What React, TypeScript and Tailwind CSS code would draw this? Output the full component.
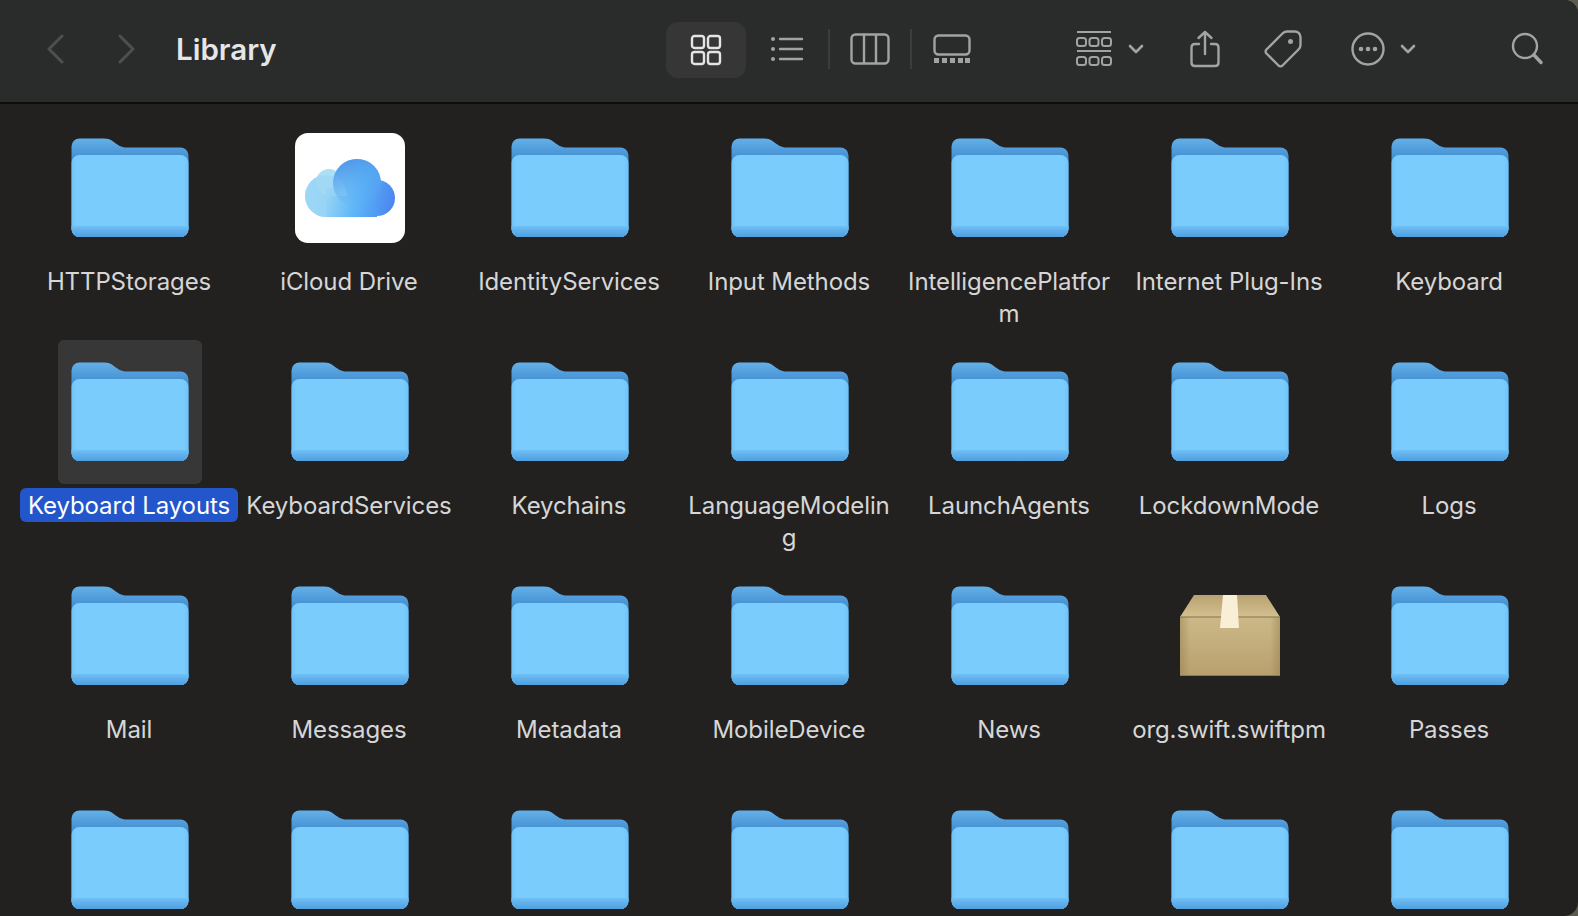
const rows: { name: string; kind?: "icloud" | "package"; selected?: boolean }[] = [
  { name: "HTTPStorages" },
  { name: "iCloud Drive", kind: "icloud" },
  { name: "IdentityServices" },
  { name: "Input Methods" },
  { name: "IntelligencePlatform" },
  { name: "Internet Plug-Ins" },
  { name: "Keyboard" },
  { name: "Keyboard Layouts", selected: true },
  { name: "KeyboardServices" },
  { name: "Keychains" },
  { name: "LanguageModeling" },
  { name: "LaunchAgents" },
  { name: "LockdownMode" },
  { name: "Logs" },
  { name: "Mail" },
  { name: "Messages" },
  { name: "Metadata" },
  { name: "MobileDevice" },
  { name: "News" },
  { name: "org.swift.swiftpm", kind: "package" },
  { name: "Passes" },
  { name: "" },
  { name: "" },
  { name: "" },
  { name: "" },
  { name: "" },
  { name: "" },
  { name: "" },
];

function FolderIcon() {
  return (
    <svg width="118" height="100" viewBox="0 0 118 100" className="block">
      <defs>
        <linearGradient id="fback" gradientUnits="userSpaceOnUse" x1="0" y1="0" x2="0" y2="19">
          <stop offset="0" stopColor="#63b1ea" />
          <stop offset="1" stopColor="#4690d2" />
        </linearGradient>
        <linearGradient id="ffront" x1="0" y1="0" x2="1" y2="0">
          <stop offset="0" stopColor="#70c2f6" />
          <stop offset="0.04" stopColor="#7accfc" />
          <stop offset="0.96" stopColor="#7accfc" />
          <stop offset="1" stopColor="#70c2f6" />
        </linearGradient>
        <linearGradient id="fstrip" x1="0" y1="0" x2="0" y2="1">
          <stop offset="0" stopColor="#6fc0f5" />
          <stop offset="0.4" stopColor="#62b3ec" />
          <stop offset="1" stopColor="#4f9ee0" />
        </linearGradient>
      </defs>
      <path
        d="M8.500 0.500H33C37.500 0.500 39.500 1.500 42.500 3.700C47 7 50 9.500 55.500 9.500H109.500A8 8 0 0 1 117.500 17.500V91A8 8 0 0 1 109.500 99H8.500A8 8 0 0 1 0.500 91V8.500A8 8 0 0 1 8.500 0.500Z"
        fill="url(#fback)"
      />
      <path
        d="M8.500 17H109.500A8 8 0 0 1 117.500 25V91A8 8 0 0 1 109.500 99H8.500A8 8 0 0 1 0.500 91V25A8 8 0 0 1 8.500 17Z"
        fill="url(#ffront)"
      />
      <path d="M0.500 88H117.500V91A8 8 0 0 1 109.500 99H8.500A8 8 0 0 1 0.500 91Z" fill="url(#fstrip)" />
    </svg>
  );
}

function CloudIcon() {
  return (
    <div className="w-[110px] h-[110px] rounded-[13px] bg-white flex items-center justify-center">
      <svg width="92" height="60" viewBox="0 0 92 60">
        <defs>
          <linearGradient id="cl" gradientUnits="userSpaceOnUse" x1="0" y1="20" x2="91" y2="40">
            <stop offset="0" stopColor="#a5dcf6" />
            <stop offset="0.3" stopColor="#93d2f5" />
            <stop offset="0.6" stopColor="#5db6f8" />
            <stop offset="1" stopColor="#4a86ee" />
          </linearGradient>
          <linearGradient id="ct" x1="0.2" y1="0" x2="0.6" y2="1">
            <stop offset="0" stopColor="#4c93e8" />
            <stop offset="1" stopColor="#5db6f8" stopOpacity="0" />
          </linearGradient>
        </defs>
        <g fill="url(#cl)">
          <circle cx="22" cy="38" r="21" />
          <circle cx="25" cy="24" r="13" fill="#acdef5" />
          <circle cx="53" cy="25" r="24" />
          <circle cx="73" cy="40" r="18" />
          <rect x="22" y="30" width="51" height="29" />
        </g>
        <circle cx="22" cy="38" r="21" fill="#9ad6f5" opacity="0.6" />
        <path d="M22 59V38H73V59Z" fill="url(#cl)" />
        <circle cx="53" cy="25" r="24" fill="url(#ct)" />
      </svg>
    </div>
  );
}

function PackageIcon() {
  return (
    <svg width="102" height="82" viewBox="0 0 102 82" className="block">
      <defs>
        <linearGradient id="box" x1="0" y1="0" x2="0" y2="1">
          <stop offset="0" stopColor="#ccb888" />
          <stop offset="1" stopColor="#b8a06e" />
        </linearGradient>
        <linearGradient id="flap" x1="0" y1="0" x2="0" y2="1">
          <stop offset="0" stopColor="#b9a272" />
          <stop offset="1" stopColor="#d3bf8f" />
        </linearGradient>
        <linearGradient id="edge" x1="0" y1="0" x2="1" y2="0">
          <stop offset="0" stopColor="#8f7a4e" stopOpacity="0.45" />
          <stop offset="0.1" stopColor="#8f7a4e" stopOpacity="0" />
          <stop offset="0.9" stopColor="#8f7a4e" stopOpacity="0" />
          <stop offset="1" stopColor="#8f7a4e" stopOpacity="0.45" />
        </linearGradient>
      </defs>
      <path d="M15 0H87L101 22H1Z" fill="url(#flap)" />
      <rect x="1" y="22" width="100" height="59" fill="url(#box)" />
      <rect x="1" y="22" width="100" height="59" fill="url(#edge)" />
      <rect x="1" y="21.500" width="100" height="1" fill="#85724c" />
      <rect x="1" y="80" width="100" height="1" fill="#8f7a4e" />
      <path d="M44 0H58L60 33H41Z" fill="#f8efd6" />
    </svg>
  );
}

function ToolIcon({ w, h, children, color = "#a3a3a3" }: { w: number; h: number; children: React.ReactNode; color?: string }) {
  return (
    <svg width={w} height={h} viewBox={`0 0 ${w} ${h}`} fill="none" stroke={color} strokeWidth="2.400" strokeLinecap="round" strokeLinejoin="round">
      {children}
    </svg>
  );
}

function Toolbar() {
  return (
    <div className="h-[104px] shrink-0 bg-[#2a2b2b] border-b-2 border-[#0d0d0d] flex items-center pb-[4px]">
      <div className="ml-[46px] w-[18px] flex justify-center">
        <ToolIcon w={18} h={30} color="#4f4f4f">
          <path d="M16 2L3 15L16 28" strokeWidth="3" />
        </ToolIcon>
      </div>
      <div className="ml-[54px] w-[18px] flex justify-center">
        <ToolIcon w={18} h={30} color="#4f4f4f">
          <path d="M2 2L15 15L2 28" strokeWidth="3" />
        </ToolIcon>
      </div>
      <div className="ml-[40px] text-[29.500px] font-semibold text-[#e6e6e6] w-[490px]">Library</div>

      <div className="mt-[2px] w-20 h-14 rounded-xl bg-[#363636] flex items-center justify-center">
        <ToolIcon w={32} h={32} color="#e4e4e4">
          <rect x="2" y="2" width="12" height="12" rx="2.500" />
          <rect x="18" y="2" width="12" height="12" rx="2.500" />
          <rect x="2" y="18" width="12" height="12" rx="2.500" />
          <rect x="18" y="18" width="12" height="12" rx="2.500" />
        </ToolIcon>
      </div>
      <div className="ml-[24px]">
        <ToolIcon w={34} h={26}>
          <circle cx="3" cy="3" r="2" fill="#a3a3a3" stroke="none" />
          <circle cx="3" cy="13" r="2" fill="#a3a3a3" stroke="none" />
          <circle cx="3" cy="23" r="2" fill="#a3a3a3" stroke="none" />
          <path d="M10 3H32M10 13H32M10 23H32" />
        </ToolIcon>
      </div>
      <div className="ml-[24px] w-0.5 h-10 bg-[#3c3c3c]" />
      <div className="ml-[20px]">
        <ToolIcon w={40} h={32}>
          <rect x="1.500" y="1.500" width="37" height="29" rx="4" />
          <path d="M14 2V30M26 2V30" />
        </ToolIcon>
      </div>
      <div className="ml-[20px] w-0.5 h-10 bg-[#3c3c3c]" />
      <div className="ml-[21px]">
        <ToolIcon w={38} h={30}>
          <rect x="1.500" y="1.500" width="35" height="19" rx="4" />
          <g fill="#a3a3a3" stroke="none">
            <rect x="1" y="24" width="5" height="5" />
            <rect x="9" y="24" width="5" height="5" />
            <rect x="17" y="24" width="5" height="5" />
            <rect x="25" y="24" width="5" height="5" />
            <rect x="32" y="24" width="5" height="5" />
          </g>
        </ToolIcon>
      </div>
      <div className="ml-[105px]">
        <ToolIcon w={36} h={36}>
          <path d="M1 1H35M1 20H35" strokeWidth="2" strokeLinecap="butt" />
          <g strokeWidth="2">
            <rect x="1" y="7" width="9" height="8" rx="2.500" />
            <rect x="13.500" y="7" width="9" height="8" rx="2.500" />
            <rect x="26" y="7" width="9" height="8" rx="2.500" />
            <rect x="1" y="26" width="9" height="8" rx="2.500" />
            <rect x="13.500" y="26" width="9" height="8" rx="2.500" />
            <rect x="26" y="26" width="9" height="8" rx="2.500" />
          </g>
        </ToolIcon>
      </div>
      <div className="ml-[16px]">
        <ToolIcon w={16} h={10}>
          <path d="M2 2L8 8L14 2" strokeWidth="2.600" />
        </ToolIcon>
      </div>
      <div className="ml-[46px]">
        <ToolIcon w={30} h={38}>
          <path d="M9 14H5C3 14 1.500 15.500 1.500 17.500V32.500C1.500 34.500 3 36 5 36H25C27 36 28.500 34.500 28.500 32.500V17.500C28.500 15.500 27 14 25 14H21" />
          <path d="M15 24V2M8.500 8L15 2L21.500 8" />
        </ToolIcon>
      </div>
      <div className="ml-[44px]">
        <ToolIcon w={38} h={38}>
          <path d="M23 1.500H31C34 1.500 36.500 4 36.500 7V15C36.500 17 36 18 34.500 19.500L18.500 35.500C17.500 36.700 15.500 36.700 14.500 35.500L2.500 23.500C1.300 22.500 1.300 20.500 2.500 19.500L19 3C20.500 1.800 21.500 1.500 23 1.500Z" />
          <circle cx="26.500" cy="11.500" r="2.500" fill="#a3a3a3" stroke="none" />
        </ToolIcon>
      </div>
      <div className="ml-[49px]">
        <ToolIcon w={34} h={34}>
          <circle cx="17" cy="17" r="15.500" />
          <g fill="#a3a3a3" stroke="none">
            <circle cx="10" cy="17" r="2.300" />
            <circle cx="17" cy="17" r="2.300" />
            <circle cx="24" cy="17" r="2.300" />
          </g>
        </ToolIcon>
      </div>
      <div className="ml-[15px]">
        <ToolIcon w={16} h={10}>
          <path d="M2 2L8 8L14 2" strokeWidth="2.600" />
        </ToolIcon>
      </div>
      <div className="ml-[95px]">
        <ToolIcon w={32} h={34}>
          <circle cx="14" cy="14" r="12" />
          <path d="M23 23L30 30.500" strokeWidth="3.400" />
        </ToolIcon>
      </div>
    </div>
  );
}

export default function App() {
  return (
    <div className="w-[1578px] h-[916px] bg-[#5c5c50]">
      <div className="w-full h-full overflow-hidden rounded-tr-[14px] rounded-br-[14px] bg-[#222120] flex flex-col font-['Inter','Liberation_Sans',sans-serif]">
        <Toolbar />
        <div className="grid grid-cols-[repeat(7,220px)] auto-rows-[224px] pl-5 pt-3">
          {rows.map((item, i) => (
            <div key={i} className="flex flex-col items-center">
              <div className={`w-36 h-36 rounded-md flex items-center justify-center ${item.selected ? "bg-[#373737]" : ""}`}>
                {item.kind === "icloud" ? <CloudIcon /> : item.kind === "package" ? <PackageIcon /> : <FolderIcon />}
              </div>
              <div
                className={`mt-1 mr-[2px] text-[24px] leading-[32px] tracking-[-0.1px] text-center break-all ${
                  item.selected ? "bg-[#2356cb] text-white rounded-md px-1 pt-[2px] w-[218px]" : "text-[#d6d6d6] w-[206px] pt-[2px]"
                }`}
              >
                {item.name}
              </div>
            </div>
          ))}
        </div>
      </div>
    </div>
  );
}
